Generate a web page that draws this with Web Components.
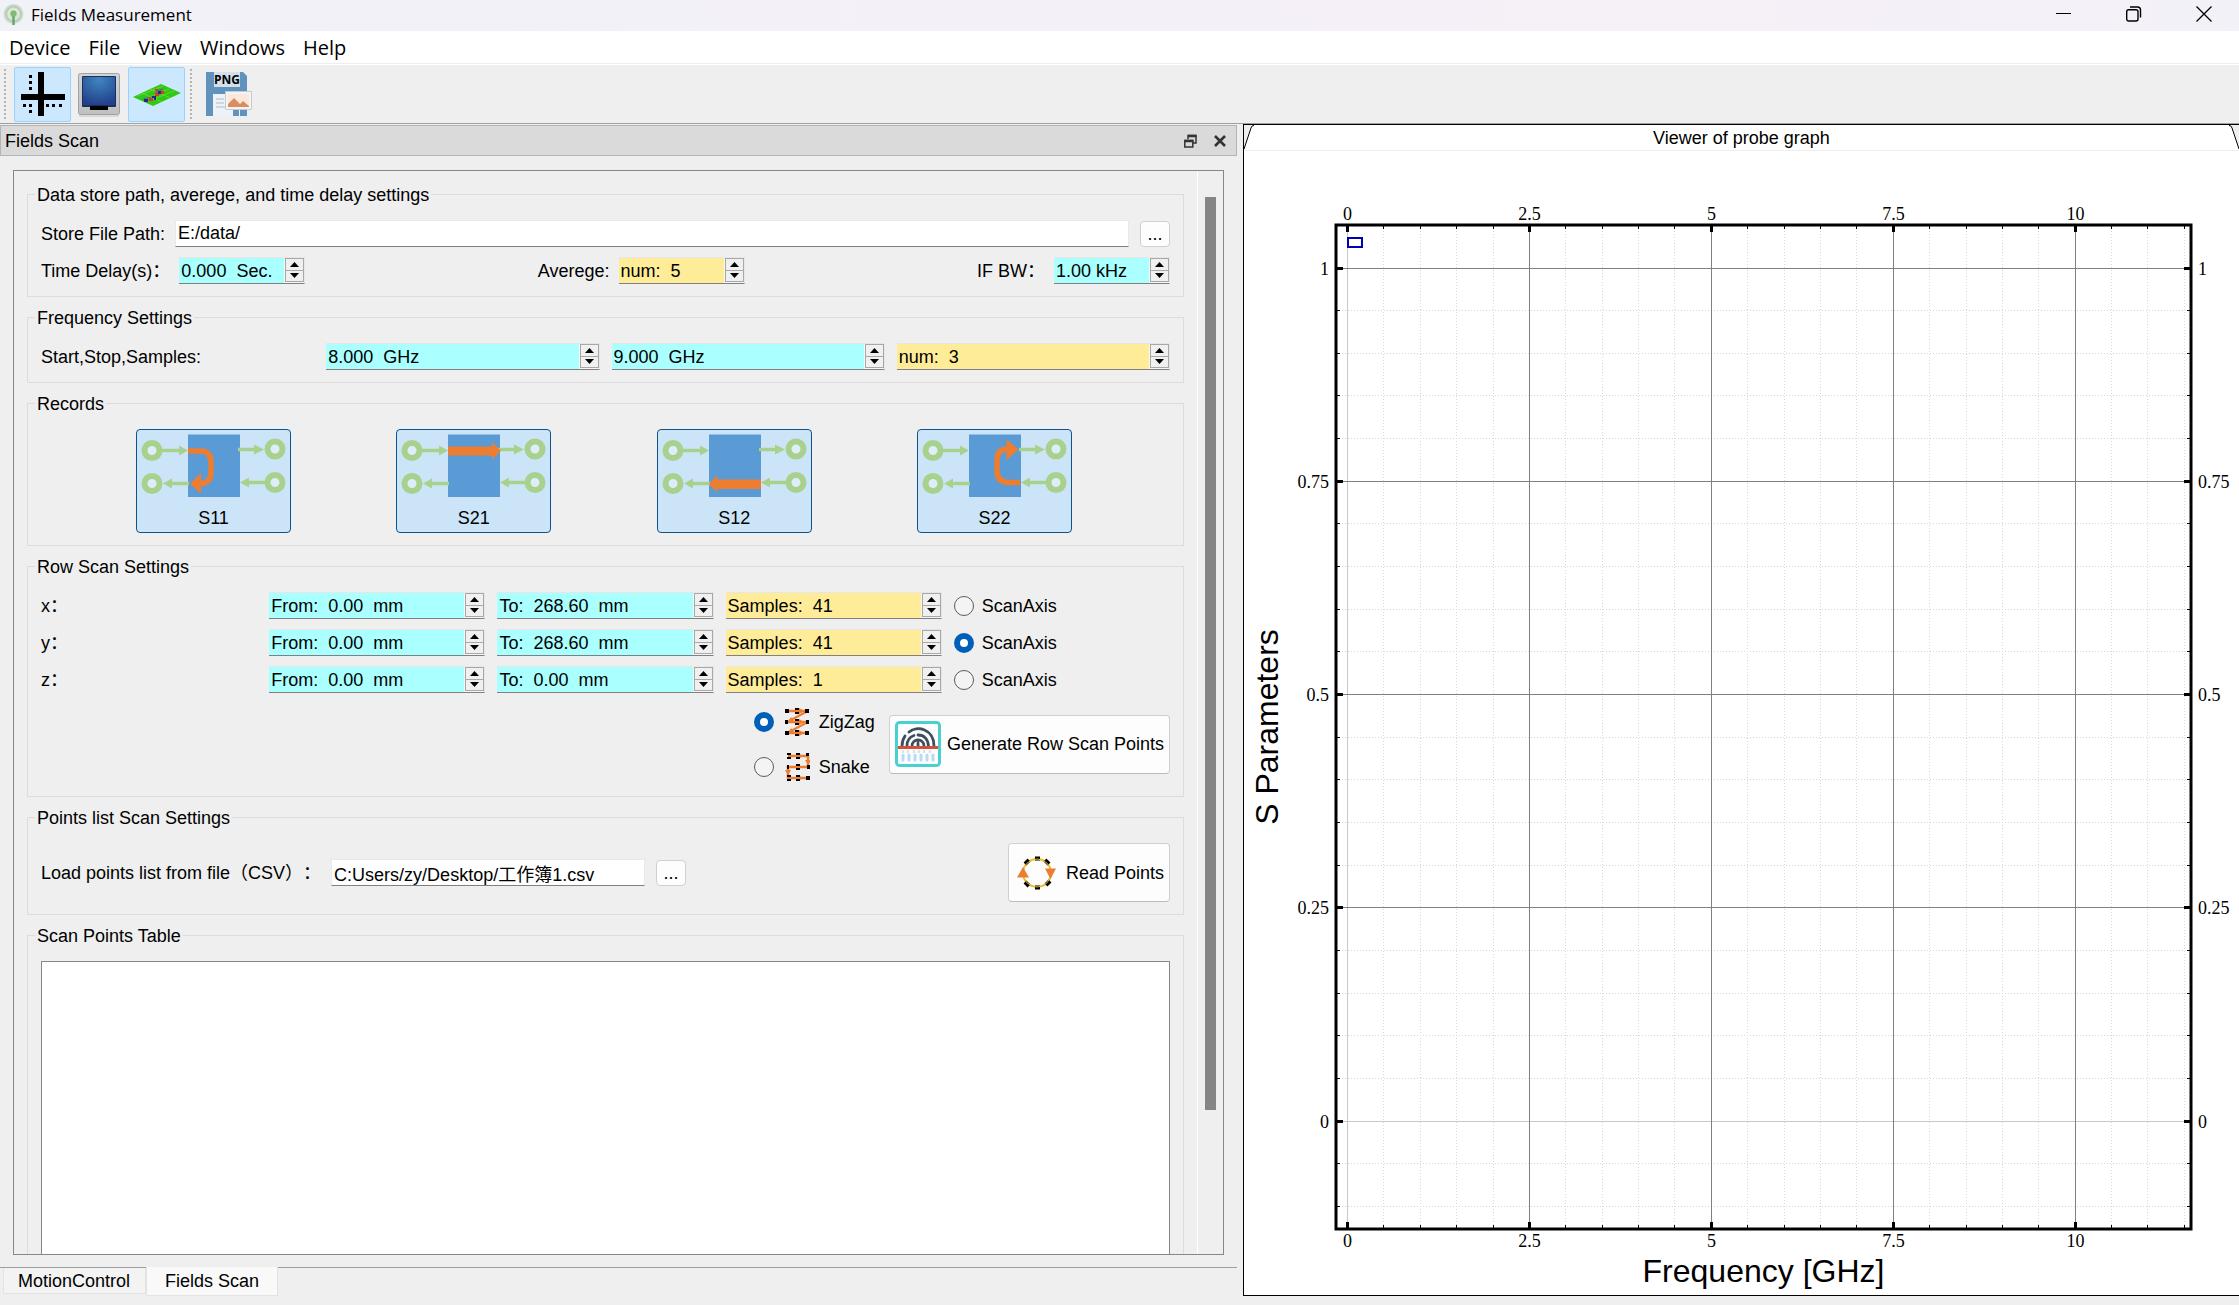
<!DOCTYPE html>
<html lang="en">
<head>
<meta charset="utf-8">
<title>Fields Measurement</title>
<style>
  html, body {
    margin: 0;
    height: 100%;
  }
  body {
    background: #efefef;
    color: #000;
    font: 18px/20px "Liberation Sans", "Noto Sans CJK SC", sans-serif;
    text-spacing-trim: space-all;
  }
</style>
</head>
<body>
<fields-app></fields-app>

<script>
// Shared by every element: form controls do not inherit the font by default
const BASE = `
  *, *::before, *::after { box-sizing: border-box; }
  button, input { font: inherit; color: inherit; margin: 0; }
  button { cursor: pointer; }
  svg { display: block; }
`;

class BaseElement extends HTMLElement {
  constructor() {
    super();
    this.attachShadow({ mode: "open", delegatesFocus: true });
  }

  connectedCallback() {
    this.shadowRoot.innerHTML = `<style>${BASE}${this.styles()}</style>${this.markup()}`;
  }

  attr(name, fallback = "") {
    return this.getAttribute(name) ?? fallback;
  }

  styles() {
    return ":host { display: block; }";
  }

  markup() {
    return "<slot></slot>";
  }
}

class TitleBar extends BaseElement {
  styles() {
    return `
      :host {
        display: flex;
        align-items: center;
        height: 31px;
        padding: 0 0 2px 3px;
        background: linear-gradient(90deg, #f1f1f8, #f6f0f7 75%, #f3f1f8);
        font: 17px/24px "Open Sans", "Noto Sans", sans-serif;
      }
      .name { flex: 1; margin-left: 7px; }
      button {
        display: grid;
        place-items: center;
        width: 70px;
        height: 27px;
        align-self: flex-start;
        padding: 0;
        border: 0;
        background: none;
      }
    `;
  }

  markup() {
    return `
      <svg width="21" height="22" viewBox="0 0 21 22" fill="none">
        <circle cx="10.5" cy="10" r="10" fill="#cfdccd"/>
        <circle cx="10.5" cy="10" r="7.5" stroke="#b3cdae" stroke-width="1.5"/>
        <circle cx="10.5" cy="10" r="5" stroke="#e4ece2" stroke-width="1.5"/>
        <path d="M8 21l2.500-6 2.500 6z" fill="#f1f1f8" opacity=".5"/>
        <path d="M10.500 11v10" stroke="#6aa566" stroke-width="2.500"/>
        <circle cx="10.500" cy="9.500" r="3" fill="#7cbd72"/>
      </svg>
      <span class="name">Fields Measurement</span>
      <button aria-label="Minimize">
        <svg width="16" height="16"><path d="M0 7.500h15" stroke="#000"/></svg>
      </button>
      <button aria-label="Restore">
        <svg width="16" height="16" fill="none" stroke="#000" stroke-width="1.400">
          <rect x=".7" y="3.700" width="11.300" height="11.300" rx="2"/>
          <path d="M4 1h7.500a3 3 0 0 1 3 3v7.500"/>
        </svg>
      </button>
      <button aria-label="Close">
        <svg width="16" height="16" stroke="#000" stroke-width="1.300"><path d="M.5.5l15 15M15.500.5l-15 15"/></svg>
      </button>
    `;
  }
}

class MenuBar extends BaseElement {
  styles() {
    return `
      :host {
        display: flex;
        height: 34px;
        padding-bottom: 1px;
        background: #fff;
        font: 20px/24px "Open Sans", "Noto Sans", sans-serif;
      }
      nav {
        display: flex;
        flex: 1;
        border-bottom: 1px solid #eee;
      }
      button {
        padding: 4px 9px 2px;
        border: 0;
        background: none;
      }
    `;
  }

  markup() {
    const items = this.attr("items").split(",");
    return `<nav>${items.map((item) => `<button>${item}</button>`).join("")}</nav>`;
  }
}

const TOOL_ICONS = {
  cross: `
    <svg width="48" height="48" viewBox="0 0 48 48">
      <path d="M19 2h6v44h-6zM2 24h44v6H2z"/>
      <path d="M10 5h3v3h-3zm0 6h3v3h-3zm0 6h3v3h-3zM4 34h3v3H4zm6 0h3v3h-3zm0 6h3v3h-3zm17-6h3v3h-3zm6 0h3v3h-3zm7 0h3v3h-3z"/>
    </svg>`,
  monitor: `
    <svg width="48" height="48" viewBox="1 0 48 48">
      <defs>
        <linearGradient id="case" x2="0" y2="1"><stop stop-color="#d4d4d4"/><stop offset="1" stop-color="#c0c0c0"/></linearGradient>
        <radialGradient id="glass" cx=".5" cy=".1" r=".9"><stop stop-color="#3f86c0"/><stop offset="1" stop-color="#23408a"/></radialGradient>
      </defs>
      <rect x="4" y="44" width="40" height="3" rx="1.500" fill="#d8d8d8"/>
      <rect x="3.500" y="3.500" width="41" height="41" rx="2" fill="url(#case)" stroke="#a2a2a2"/>
      <rect x="7" y="6" width="34" height="31" rx="1" fill="#1a3060"/>
      <rect x="8" y="7" width="32" height="28" fill="url(#glass)"/>
      <path d="M15 36h18v4H15z"/>
    </svg>`,
  field: `
    <svg width="48" height="48" viewBox="0 0 48 48">
      <path d="M0 27L28 14 48 23 20 36z" fill="#2fc818"/>
      <path d="M5 26l25-10m-19 13l25-10M16 31l25-10M9 23l20 9M17 19l20 9" stroke="#5adf1a" fill="none"/>
      <path d="M9 30l8-1 4-5 8-2 1-4-7 3-3 5-9 2z" fill="#5a7a5c"/>
      <path d="M16 28h4v3h-4zM22 23h4v3h-4zM28 21h3v3h-3zM22 19h3v2h-3z" fill="#e8303c"/>
      <path d="M11 29h4v3h-4zM19 26h4v2h-4zM25 21h3v3h-3zM21 28h2v2h-2z" fill="#1c2a8e"/>
    </svg>`,
  png: `
    <svg width="48" height="48" viewBox="0 0 48 48">
      <path d="M1 2h37l4 4v40H1z" fill="#5f92bd"/>
      <path d="M9 2h26v15H9z" fill="#d3e0ec"/>
      <path d="M8 24h27v22H8z" fill="#eef2f7"/>
      <path d="M11 29h8m-8 4h8m-8 4h12" stroke="#a5bdd4"/>
      <path d="M28 39h6v7h-6z" fill="#5f92bd"/>
      <path d="M20.500 21.500h26v18h-26z" fill="#f6f4f2" stroke="#c4ccd4"/>
      <path d="M23 24h21v13H23z" fill="#fce8da"/>
      <path d="M23 37v-3l6-6 6 6 3-3 6 5v1z" fill="#d98d63"/>
      <text x="22" y="14" font-family="Open Sans" font-size="12" font-weight="700" text-anchor="middle">PNG</text>
    </svg>`,
};

class ToolBar extends BaseElement {
  styles() {
    return `
      :host {
        display: flex;
        height: 59px;
        border-bottom: 1px solid #a0a0a0;
        background: #efefef;
      }
      .group {
        display: flex;
        align-items: center;
        padding: 0 1px 0 4px;
      }
      .group:first-child { border-right: 1px solid #a0a0a0; }
      .grip {
        width: 2px;
        height: 51px;
        margin-right: 8px;
        background: repeating-linear-gradient(#b4b4b4 0 2px, transparent 2px 4px);
      }
    `;
  }

  markup() {
    return `
      <div class="group">
        <div class="grip"></div>
        <tool-button icon="cross" label="Motion control" pressed></tool-button>
        <tool-button icon="monitor" label="Instrument"></tool-button>
        <tool-button icon="field" label="Fields scan" pressed></tool-button>
      </div>
      <div class="group">
        <div class="grip"></div>
        <tool-button icon="png" label="Save as PNG"></tool-button>
      </div>
    `;
  }
}

class ToolButton extends BaseElement {
  styles() {
    return `
      button {
        display: grid;
        place-items: center;
        width: 57px;
        height: 55px;
        padding: 0;
        border: 1px solid transparent;
        border-radius: 2px;
        background: none;
      }
      button[aria-pressed="true"] {
        border-color: #99d1ff;
        background: #cce8ff;
      }
    `;
  }

  markup() {
    return `<button aria-label="${this.attr("label")}" aria-pressed="${this.hasAttribute("pressed")}">${
      TOOL_ICONS[this.attr("icon")]
    }</button>`;
  }
}

class DockPanel extends BaseElement {
  styles() {
    return `
      :host {
        display: flex;
        flex-direction: column;
        min-width: 0;
        min-height: 0;
      }
      header {
        display: flex;
        align-items: center;
        gap: 6px;
        height: 31px;
        margin-top: 1px;
        padding: 0 4px;
        border: 1px solid #b4b4b4;
        background: #dadada;
      }
      header span { flex: 1; }
      header button {
        display: grid;
        place-items: center;
        width: 24px;
        height: 24px;
        padding: 0;
        border: 0;
        background: none;
      }
      .body {
        display: flex;
        flex: 1;
        min-height: 0;
        padding: 14px 13px 12px;
      }
      .frame {
        display: flex;
        flex: 1;
        min-width: 0;
        border: 1px solid #828790;
      }
      .content {
        flex: 1;
        min-width: 0;
        overflow: hidden;
        padding: 12px 13px 0;
      }
      .scrollbar {
        width: 26px;
        padding: 26px 7px 20px;
        border-left: 1px solid #fff;
      }
      .thumb {
        height: 88%;
        background: #858585;
      }
      .tabs {
        display: flex;
        align-items: flex-start;
        height: 29px;
        padding-left: 3px;
        border-top: 1px solid #a0a0a0;
      }
      .tabs button {
        height: 26px;
        padding: 0 15px 0 14px;
        border: 1px solid #e3e3e3;
        border-top: 0;
        background: #f3f3f3;
      }
      .tabs button[aria-selected="true"] {
        height: 29px;
        margin-top: -1px;
        padding: 0 18px;
        background: #f9f9f9;
      }
    `;
  }

  markup() {
    const title = this.attr("heading");
    const tabs = this.attr("tabs").split(",");
    return `
      <header>
        <span>${title}</span>
        <button aria-label="Float">
          <svg width="13" height="14" fill="none" stroke="#333" stroke-width="1.500">
            <path d="M4 5V1.500h8V9H9"/><path d="M4 2h8.500" stroke-width="2.500"/>
            <path d="M.8 6.500h8V13h-8z"/><path d="M.5 7h9" stroke-width="2.500"/>
          </svg>
        </button>
        <button aria-label="Close">
          <svg width="12" height="12" stroke="#333" stroke-width="2.600"><path d="M1 1l10 10M11 1L1 11"/></svg>
        </button>
      </header>
      <div class="body">
        <div class="frame">
          <div class="content"><slot></slot></div>
          <div class="scrollbar"><div class="thumb"></div></div>
        </div>
      </div>
      <div class="tabs" role="tablist">
        ${tabs
          .map((tab) => `<button role="tab" aria-selected="${tab === title}">${tab}</button>`)
          .join("")}
      </div>
    `;
  }
}

class GroupBox extends BaseElement {
  styles() {
    return `
      :host {
        display: block;
        margin-bottom: 9px;
      }
      fieldset {
        min-width: 0;
        margin: 0;
        padding: 15px 13px 12px;
        border: 1px solid #dcdcdc;
      }
      legend {
        margin-left: -6px;
        padding: 2px 2px 0;
      }
    `;
  }

  markup() {
    return `<fieldset><legend>${this.attr("heading")}</legend><slot></slot></fieldset>`;
  }
}

class SpinBox extends BaseElement {
  static formAssociated = true;

  styles() {
    return `
      :host {
        display: flex;
        height: 27px;
        min-width: 0;
        border: 1px solid #e6e6e6;
        border-left: 0;
        border-bottom-color: #808080;
        background: #f6f6f6;
      }
      input {
        flex: 1;
        width: 0;
        min-width: 0;
        padding: 0 2px;
        border: 0;
        outline: 0;
        background: #aaffff;
      }
      :host([kind="count"]) input { background: #ffec99; }
      .steps {
        display: flex;
        flex-direction: column;
        width: 19px;
        margin: 0 0 1px 1px;
        border: 1px solid #a8a8a8;
      }
      .steps button {
        display: grid;
        place-items: center;
        flex: 1;
        min-height: 0;
        padding: 0;
        border: 0;
        background: #f0f0f0;
      }
      .steps button + button { border-top: 1px solid #a8a8a8; }
    `;
  }

  markup() {
    return `
      <input type="text" value="${this.attr("value")}" aria-label="${this.attr("label")}">
      <div class="steps">
        <button aria-label="Increase"><svg width="9" height="5"><path d="M4.500 0L9 5H0z"/></svg></button>
        <button aria-label="Decrease"><svg width="9" height="5"><path d="M0 0h9L4.500 5z"/></svg></button>
      </div>
    `;
  }
}

class PathInput extends BaseElement {
  static formAssociated = true;

  styles() {
    return `
      :host {
        display: flex;
        align-items: center;
        gap: 11px;
        min-width: 0;
      }
      input {
        flex: 1;
        width: 0;
        height: 27px;
        padding: 0 2px;
        border: 1px solid #e9e9e9;
        border-bottom-color: #808080;
        outline: 0;
        background: #fff;
      }
      button {
        width: 30px;
        height: 26px;
        padding: 0;
        border: 1px solid #d0d0d0;
        border-radius: 4px;
        background: #fdfdfd;
      }
    `;
  }

  markup() {
    return `
      <input type="text" value="${this.attr("value")}" aria-label="${this.attr("label")}">
      <button aria-label="Browse">...</button>
    `;
  }
}

// The orange signal path of each S parameter
const SIGNALS = {
  S11: `<path d="M52 22h12q11 0 11 11v10q0 11.500-11 11.500" fill="none" stroke="#ed7d31" stroke-width="5.500"/>
        <path d="M54 54.500L65 44v21z" fill="#ed7d31"/>`,
  S21: `<path d="M52 17.500h44V13l9 8.700-9 8.800v-4H52z" fill="#ed7d31"/>`,
  S12: `<path d="M104 50.500H60V46l-8 8.800 8 8.700V60h44z" fill="#ed7d31"/>`,
  S22: `<path d="M103 53.500H92q-12 0-12-12V31q0-11 11-11" fill="none" stroke="#ed7d31" stroke-width="5.500"/>
        <path d="M101.500 20.500L89.500 10v21z" fill="#ed7d31"/>`,
};

class RecordButton extends BaseElement {
  styles() {
    return `
      button {
        display: flex;
        flex-direction: column;
        align-items: center;
        width: 155px;
        height: 104px;
        padding: 0;
        border: 1px solid #12528a;
        border-radius: 4px;
        background: #cce4f7;
      }
    `;
  }

  markup() {
    const name = this.attr("name");
    return `
      <button aria-pressed="true">
        <svg width="153" height="78" viewBox="1 1 153 78">
          <path d="M52 5.500h52V68H52z" fill="#5b9bd5"/>
          <g fill="#fff" fill-opacity=".35" stroke="#a9d18e" stroke-width="6">
            <circle cx="16" cy="21.500" r="7.500"/>
            <circle cx="16" cy="54.500" r="7.500"/>
            <circle cx="139" cy="20" r="7.500"/>
            <circle cx="139" cy="53.500" r="7.500"/>
          </g>
          <path d="M26 21.500h18M35 54.500h18M102 20.500h18M113 53.500h18" stroke="#a9d18e" stroke-width="3.500"/>
          <path d="M43 16.500l9 5-9 5zM36 49.500l-9 5 9 5zM118 15.500l10 5-10 5zM113 48.500l-9 5 9 5z" fill="#a9d18e"/>
          ${SIGNALS[name]}
        </svg>
        <span>${name}</span>
      </button>
    `;
  }
}

const OPTION_ICONS = {
  zigzag: `
    <svg width="26" height="28" viewBox="0 0 26 28">
      <path d="M3 14h20M3 25h20M3 3h20" stroke="#ed7d31" stroke-width="2.500" fill="none"/>
      <path d="M22 4L5 13M22 15L5 24" stroke="#ed7d31" stroke-width="2"/>
      <path d="M4 14l3-5 3 4zM4 25l3-5 3 4zM15 0l5 3-5 3zM15 11l5 3-5 3zM15 22l5 3-5 3z" fill="#ed7d31"/>
      <path d="M1 1h4v4H1zm10-1h4v2h-4zm0 4h4v2h-4zm10-3h4v4h-4zM1 12h3v4H1zm10-1h4v2h-4zm0 4h4v2h-4zm11-3h3v4h-3zM1 23h4v4H1zm10-1h4v2h-4zm0 4h4v2h-4zm10-3h4v4h-4z"/>
    </svg>`,
  snake: `
    <svg width="26" height="28" viewBox="0 0 26 28">
      <path d="M4 3h20v11H4v11h21" stroke="#ed7d31" stroke-width="2.500" fill="none"/>
      <path d="M14 0l5 3-5 3zM14 22l5 3-5 3zM14 11l-4 3 4 3zM21 7h6l-3 5zM1 17h6l-3 5z" fill="#ed7d31"/>
      <path d="M3 0h4v2H3zm0 4h4v2H3zm9-4h4v2h-4zm0 4h4v2h-4zm10-4h3v3h-3zM3 12h2v4H3zm9-1h4v2h-4zm0 4h4v2h-4zm11-3h3v4h-3zM3 22h4v2H3zm0 4h4v2H3zm9-4h4v2h-4zm0 4h4v2h-4zm10-3h4v4h-4z"/>
    </svg>`,
};

class RadioOption extends BaseElement {
  styles() {
    return `
      label {
        display: flex;
        align-items: center;
        gap: 8px;
      }
      input {
        appearance: none;
        width: 20px;
        height: 20px;
        border: 1px solid #5c5c5c;
        border-radius: 50%;
        background: #f4f4f4;
      }
      input:checked {
        border: 6px solid #005fb8;
        background: #fff;
      }
      svg { margin: 0 1px 0 2px; }
    `;
  }

  markup() {
    return `
      <label>
        <input type="radio"${this.hasAttribute("checked") ? " checked" : ""}>
        ${OPTION_ICONS[this.attr("icon")] ?? ""}
        <span><slot></slot></span>
      </label>
    `;
  }
}

const ACTION_ICONS = {
  generate: `
    <svg width="46" height="46" viewBox="0 0 46 46" fill="none">
      <rect x="1.500" y="1.500" width="43" height="43" rx="3" fill="#fbfefe" stroke="#4bd0cf" stroke-width="3"/>
      <g stroke="#3f4d5c" stroke-width="2.800" stroke-linecap="round">
        <path d="M7 25c0-4 1-7 3-10M14 11c8-7 25-3 25 14M12 25c0-5 2-9 7-10.500M23 14c6 0 10 4 10.500 11M17 25c0-8 12-8 12 0M23 22v3"/>
      </g>
      <path d="M8 29v3m5-3v3m6-3v3m5-3v3m5-3v3m6-3v3" stroke="#e5e0e6" stroke-width="2.500"/>
      <path d="M8 34v5m6-5v5m6-5v5m6-5v5m6-5v5m6-5v5" stroke="#bad9f5" stroke-width="3" stroke-linecap="round"/>
      <path d="M3 26.500h40" stroke="#d1513b" stroke-width="3"/>
    </svg>`,
  read: `
    <svg width="46" height="46" viewBox="0 0 46 46" fill="none">
      <circle cx="23" cy="23" r="14" stroke="#ecc02f" stroke-width="2"/>
      <path d="M21 8.500h5M21 37.500h5M11 14l4-4M31 10l4 4M11 32l4 4M32 35l4-4" stroke="#000" stroke-width="4"/>
      <circle cx="23" cy="23" r="14" stroke="#ecc02f"/>
      <path d="M3 27.500L9 17l6 10.500zM31 18.500h11L36.500 29z" fill="#ed7d31"/>
    </svg>`,
};

class ActionButton extends BaseElement {
  styles() {
    return `
      button {
        display: flex;
        align-items: center;
        gap: 6px;
        height: 59px;
        padding: 0 5px;
        border: 1px solid #d0d0d0;
        border-bottom-color: #bcbcbc;
        border-radius: 4px;
        background: #fdfdfd;
        white-space: nowrap;
      }
    `;
  }

  markup() {
    return `<button>${ACTION_ICONS[this.attr("icon")]}<span><slot></slot></span></button>`;
  }
}

class GraphViewer extends BaseElement {
  styles() {
    return `
      :host {
        display: flex;
        flex-direction: column;
        min-width: 0;
        min-height: 0;
        border: solid #000;
        border-width: 1px 0 1px 1px;
        background: #fff;
      }
      header {
        display: flex;
        justify-content: space-between;
        height: 26px;
        border-bottom: 1px solid #eee;
        line-height: 26px;
      }
      probe-plot {
        flex: 1;
        min-height: 0;
      }
    `;
  }

  markup() {
    return `
      <header>
        <svg width="11" height="25"><path d="M0 0h10q-2 0-3 3L0 24z" fill="#efefef"/><path d="M10 .5Q8 0 7 3L0 24" fill="none" stroke="#000"/></svg>
        <span>${this.attr("heading")}</span>
        <svg width="11" height="25"><path d="M11 0H1q2 0 3 3l7 21z" fill="#efefef"/><path d="M1 .5Q3 0 4 3l7 21" fill="none" stroke="#000"/></svg>
      </header>
      <probe-plot></probe-plot>
    `;
  }
}

// Empty graph: axes, grid and legend frame, redrawn to the size of the element
class ProbePlot extends HTMLElement {
  constructor() {
    super();
    this.attachShadow({ mode: "open" });
    this.margin = { top: 74, right: 48, bottom: 66, left: 92 };
    this.xRange = [-0.158, 11.592];
    this.yRange = [-0.1263, 1.0504];
    this.observer = new ResizeObserver(() => this.render());
  }

  connectedCallback() {
    this.render();
    this.observer.observe(this);
  }

  disconnectedCallback() {
    this.observer.disconnect();
  }

  render() {
    const width = this.clientWidth;
    const height = this.clientHeight;
    const { top, right, bottom, left } = this.margin;
    const x1 = width - right;
    const y1 = height - bottom;
    const [xMin, xMax] = this.xRange;
    const [yMin, yMax] = this.yRange;
    const sx = (v) => Math.floor(left + ((v - xMin) / (xMax - xMin)) * (x1 - left));
    const sy = (v) => Math.floor(y1 - ((v - yMin) / (yMax - yMin)) * (y1 - top));

    let minor = "";
    let minorTicks = "";
    let major = "";
    let zero = "";
    let majorTicks = "";
    let labels = "";

    for (let i = 0; i <= 23; i++) {
      const x = sx(i * 0.5) + 0.5;
      if (i % 5) {
        minor += `M${x} ${top}V${y1}`;
        minorTicks += `M${x} ${top}v4M${x} ${y1}v-4`;
        continue;
      }
      if (i === 0) {
        zero += `M${x} ${top}V${y1}`;
      } else {
        major += `M${x} ${top}V${y1}`;
      }
      majorTicks += `M${x} ${top - 1}v8M${x} ${y1 + 1}v-8`;
      labels += `<text x="${x}" y="${top - 5}" text-anchor="middle">${i * 0.5}</text>
        <text x="${x}" y="${y1 + 18}" text-anchor="middle">${i * 0.5}</text>`;
    }

    for (let i = -2; i <= 20; i++) {
      const y = sy(i * 0.05) + 0.5;
      if (i % 5) {
        minor += `M${left} ${y}H${x1}`;
        minorTicks += `M${left} ${y}h4M${x1} ${y}h-4`;
        continue;
      }
      if (i === 0) {
        zero += `M${left} ${y}H${x1}`;
      } else {
        major += `M${left} ${y}H${x1}`;
      }
      majorTicks += `M${left - 1} ${y}h8M${x1 + 1} ${y}h-8`;
      labels += `<text x="${left - 7}" y="${y + 6}" text-anchor="end">${i / 20}</text>
        <text x="${x1 + 7}" y="${y + 6}">${i / 20}</text>`;
    }

    const midX = (left + x1) / 2;
    const midY = (top + y1) / 2;

    this.shadowRoot.innerHTML = `
      <style>
        :host { display: block; overflow: hidden; }
        svg { display: block; }
        .ticks { font: 18px "Liberation Serif", serif; }
        .titles { font: 32px "Liberation Sans", sans-serif; text-anchor: middle; }
      </style>
      <svg width="${width}" height="${height}" fill="none">
        <path d="${minor}" stroke="#d8d8d8" stroke-dasharray="1 2"/>
        <path d="${zero}" stroke="#c8c8c8"/>
        <path d="${major}" stroke="#808080"/>
        <rect x="${left}" y="${top}" width="${x1 - left}" height="${y1 - top}" stroke="#000" stroke-width="3"/>
        <path d="${minorTicks}" stroke="#000"/>
        <path d="${majorTicks}" stroke="#000" stroke-width="3"/>
        <rect x="${left + 12}" y="${top + 13}" width="14" height="9" fill="#fff" stroke="#0000b4" stroke-width="2"/>
        <g class="ticks" fill="#000">${labels}</g>
        <g class="titles" fill="#000">
          <text x="${midX}" y="${y1 + 53}">Frequency [GHz]</text>
          <text transform="translate(34 ${midY}) rotate(-90)">S Parameters</text>
        </g>
      </svg>
    `;
  }
}

class FieldsApp extends BaseElement {
  styles() {
    return `
      :host {
        display: flex;
        flex-direction: column;
        height: 100vh;
      }
      main {
        display: grid;
        grid-template-columns: 1237fr 996fr;
        grid-template-rows: minmax(0, 1fr);
        column-gap: 6px;
        flex: 1;
        min-height: 0;
        padding-bottom: 9px;
      }
      .row {
        display: flex;
        align-items: center;
        gap: 10px;
      }
      .row path-input { flex: 1; }
      .row .points {
        flex: 0 0 355px;
      }
      .row action-button { margin-left: auto; }
      .spread { justify-content: space-between; margin-top: 10px; }
      .spread .row { gap: 9px; }
      .spread spin-box { width: 126px; }
      .spread .narrow { width: 116px; }
      .grid {
        display: grid;
        align-items: center;
        gap: 10px 12px;
      }
      .quarters { grid-template-columns: repeat(4, minmax(0, 1fr)); }
      .fifths { grid-template-columns: repeat(5, minmax(0, 1fr)); }
      .records {
        display: flex;
        justify-content: space-between;
        padding: 0 98px 0 95px;
      }
      .generate {
        display: flex;
        align-items: center;
        justify-content: flex-end;
        gap: 14px;
        margin-top: 11px;
      }
      .orders {
        display: grid;
        grid-template-rows: 35px 35px;
        align-items: center;
        gap: 10px;
      }
      label { white-space: nowrap; }
      .table {
        height: 420px;
        border: 1px solid #828790;
        background: #fff;
      }
    `;
  }

  axisRow(axis, to, samples, checked) {
    return `
      <label for="${axis}">${axis}：</label>
      <spin-box id="${axis}" label="${axis} from" value="From:  0.00  mm"></spin-box>
      <spin-box label="${axis} to" value="To:  ${to}  mm"></spin-box>
      <spin-box kind="count" label="${axis} samples" value="Samples:  ${samples}"></spin-box>
      <radio-option${checked ? " checked" : ""}>ScanAxis</radio-option>
    `;
  }

  markup() {
    return `
      <title-bar></title-bar>
      <menu-bar items="Device,File,View,Windows,Help"></menu-bar>
      <tool-bar></tool-bar>
      <main>
        <dock-panel heading="Fields Scan" tabs="MotionControl,Fields Scan">
          <group-box heading="Data store path, averege, and time delay settings">
            <div class="row">
              <label for="store">Store File Path:</label>
              <path-input id="store" label="Store File Path" value="E:/data/"></path-input>
            </div>
            <div class="row spread">
              <div class="row">
                <label for="delay">Time Delay(s)：</label>
                <spin-box id="delay" label="Time Delay" value="0.000  Sec."></spin-box>
              </div>
              <div class="row">
                <label for="averege">Averege:</label>
                <spin-box id="averege" kind="count" label="Averege" value="num:  5"></spin-box>
              </div>
              <div class="row">
                <label for="bw">IF BW：</label>
                <spin-box id="bw" class="narrow" label="IF BW" value="1.00 kHz"></spin-box>
              </div>
            </div>
          </group-box>
          <group-box heading="Frequency Settings">
            <div class="grid quarters">
              <label for="start">Start,Stop,Samples:</label>
              <spin-box id="start" label="Start" value="8.000  GHz"></spin-box>
              <spin-box label="Stop" value="9.000  GHz"></spin-box>
              <spin-box kind="count" label="Samples" value="num:  3"></spin-box>
            </div>
          </group-box>
          <group-box heading="Records">
            <div class="records">
              ${Object.keys(SIGNALS)
                .map((name) => `<record-button name="${name}"></record-button>`)
                .join("")}
            </div>
          </group-box>
          <group-box heading="Row Scan Settings">
            <div class="grid fifths">
              ${this.axisRow("x", "268.60", 41, false)}
              ${this.axisRow("y", "268.60", 41, true)}
              ${this.axisRow("z", "0.00", 1, false)}
            </div>
            <div class="generate">
              <div class="orders">
                <radio-option icon="zigzag" checked>ZigZag</radio-option>
                <radio-option icon="snake">Snake</radio-option>
              </div>
              <action-button icon="generate">Generate Row Scan Points</action-button>
            </div>
          </group-box>
          <group-box heading="Points list Scan Settings">
            <div class="row">
              <label for="csv">Load points list from file（CSV）：</label>
              <path-input class="points" id="csv" label="Points list file" value="C:Users/zy/Desktop/工作簿1.csv"></path-input>
              <action-button icon="read">Read Points</action-button>
            </div>
          </group-box>
          <group-box heading="Scan Points Table">
            <div class="table"></div>
          </group-box>
        </dock-panel>
        <graph-viewer heading="Viewer of probe graph"></graph-viewer>
      </main>
    `;
  }
}

customElements.define("title-bar", TitleBar);
customElements.define("menu-bar", MenuBar);
customElements.define("tool-button", ToolButton);
customElements.define("tool-bar", ToolBar);
customElements.define("dock-panel", DockPanel);
customElements.define("group-box", GroupBox);
customElements.define("spin-box", SpinBox);
customElements.define("path-input", PathInput);
customElements.define("record-button", RecordButton);
customElements.define("radio-option", RadioOption);
customElements.define("action-button", ActionButton);
customElements.define("probe-plot", ProbePlot);
customElements.define("graph-viewer", GraphViewer);
customElements.define("fields-app", FieldsApp);
</script>
</body>
</html>
